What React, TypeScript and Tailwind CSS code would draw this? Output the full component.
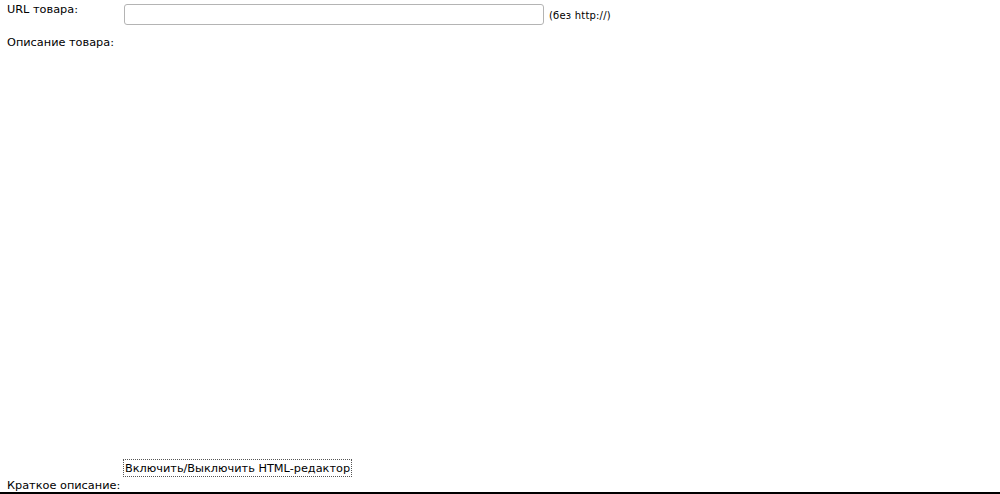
import React from 'react';

export default function App() {
  return (
    <div className="w-[1000px] h-[494px] overflow-hidden bg-white text-black font-['DejaVu_Sans',sans-serif] text-[11.3px]">
      <div className="flex items-start pl-[7px]">
        <div className="w-[117px] pt-[3px] leading-[14px]">URL товара:</div>
        <input
          type="text"
          className="mt-[4px] w-[420px] h-[21px] rounded-[3px] border border-[#b4b4b4] bg-white outline-none"
        />
        <span className="ml-[5px] mt-[10px] text-[10px] tracking-[0.2px] leading-[12px]">(без http://)</span>
      </div>
      <div className="pl-[7px] mt-[11px] leading-[14px]">Описание товара:</div>
      <div className="h-[409px]" />
      <div className="pl-[123px]">
        <button
          type="button"
          className="h-[18px] px-[1px] border border-dotted border-[#555] leading-[15px] text-[11.3px] bg-white"
        >
          Включить/Выключить HTML-редактор
        </button>
      </div>
      <div className="pl-[7px] mt-[2px] h-[13px] leading-[14px]">Краткое описание:</div>
      <div className="border-t-2 border-black" />
    </div>
  );
}
